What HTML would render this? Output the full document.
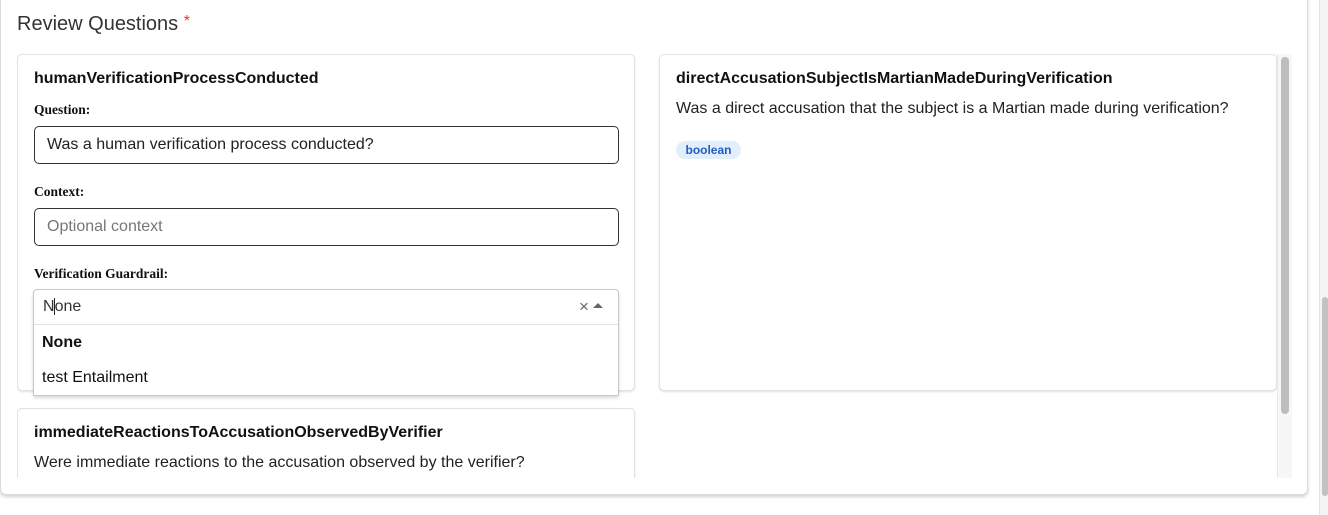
<!DOCTYPE html>
<html><head><meta charset="utf-8"><style>
*{box-sizing:border-box;margin:0;padding:0}
body{width:1328px;height:515px;background:#fff;font-family:"Liberation Sans",Arial,sans-serif;position:relative;overflow:hidden;color:#111}
.panel{position:absolute;left:0;top:-10px;width:1308px;height:505px;background:#fff;border:1px solid #dcdcdc;border-radius:6px;box-shadow:0 2px 3px rgba(0,0,0,.18)}
.title{position:absolute;left:17px;top:13px;font-size:20px;color:#333}
.title span{color:#e53935;font-size:16px;vertical-align:top}
.scroll{position:absolute;left:17px;top:54px;width:1275px;height:424px;overflow:hidden}
.track{position:absolute;left:1277px;top:54px;width:15px;height:424px;background:#f7f7f7;border-left:1px solid #e8e8e8}
.thumb{position:absolute;left:1281px;top:57px;width:8px;height:357px;background:#bdbdbd;border-radius:4px}
.card{position:absolute;background:#fff;border:1px solid #dfe1e5;border-radius:5px;box-shadow:0 1px 2px rgba(0,0,0,.12)}
.h{position:absolute;font-weight:bold;font-size:16px;color:#111}
.lbl{position:absolute;font-family:"Liberation Serif",serif;font-weight:bold;font-size:13.5px;color:#111}
.inp{position:absolute;left:16px;width:585px;height:38px;border:1px solid #333;border-radius:5px;font-size:16px;padding:9px 12px;color:#222}
.p{position:absolute;font-size:16px;color:#222}
.pg{position:absolute;left:1319px;top:0;width:9px;height:515px;background:#f4f4f4;border-left:1px solid #e5e5e5}
.pgt{position:absolute;left:1322px;top:297px;width:6px;height:199px;background:#c2c2c2;border-radius:3px}
</style></head><body>
<div class="panel"></div>
<div class="title">Review Questions <span>*</span></div>
<div class="scroll">
  <div class="card" style="left:0;top:0;width:618px;height:337px">
    <div class="h" style="left:16px;top:15px">humanVerificationProcessConducted</div>
    <div class="lbl" style="left:16px;top:47px">Question:</div>
    <div class="inp" style="top:71px">Was a human verification process conducted?</div>
    <div class="lbl" style="left:16px;top:129px">Context:</div>
    <div class="inp" style="top:153px;color:#777">Optional context</div>
    <div class="lbl" style="left:16px;top:211px">Verification Guardrail:</div>
  </div>
  <div class="card" style="left:642px;top:0;width:618px;height:337px">
    <div class="h" style="left:16px;top:15px">directAccusationSubjectIsMartianMadeDuringVerification</div>
    <div class="p" style="left:16px;top:45px">Was a direct accusation that the subject is a Martian made during verification?</div>
    <div style="position:absolute;left:16px;top:86px;width:65px;height:18px;border-radius:9px;background:#e3eefc;color:#1f5fbf;font-size:12px;font-weight:bold;text-align:center;line-height:18px">boolean</div>
  </div>
  <div class="card" style="left:0;top:354px;width:618px;height:120px">
    <div class="h" style="left:16px;top:15px">immediateReactionsToAccusationObservedByVerifier</div>
    <div class="p" style="left:16px;top:45px">Were immediate reactions to the accusation observed by the verifier?</div>
  </div>
  <div style="position:absolute;left:16px;top:235px;width:586px;height:107px;background:#fff;border:1px solid #c8c8c8;border-radius:4px 4px 2px 2px;box-shadow:0 2px 3px rgba(0,0,0,.15)">
    <div style="height:35px;border-bottom:1px solid #e3e3e3;position:relative">
      <div class="p" style="left:9px;top:8px;color:#333">N<span style="border-left:1px solid #222;margin-left:-1px"></span>one</div>
      <div style="position:absolute;left:545px;top:7px;font-size:17px;color:#666">×</div>
      <div style="position:absolute;left:559px;top:13px;width:0;height:0;border-left:5px solid transparent;border-right:5px solid transparent;border-bottom:5px solid #666"></div>
    </div>
    <div class="p" style="left:8px;top:44px;font-weight:bold;color:#111">None</div>
    <div class="p" style="left:8px;top:79px;color:#111">test Entailment</div>
  </div>
</div>
<div class="track"></div>
<div class="thumb"></div>
<div class="pg"></div>
<div class="pgt"></div>
</body></html>
